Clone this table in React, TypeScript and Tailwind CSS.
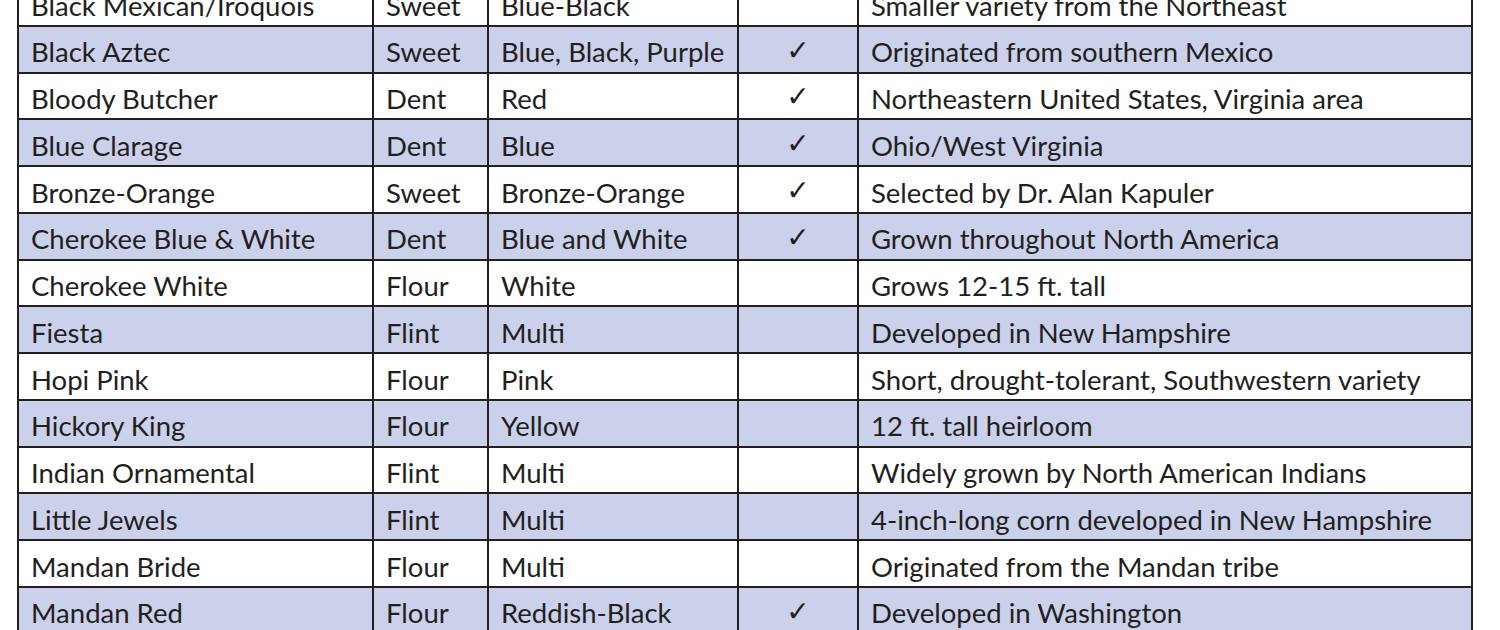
const rows: [string, string, string, boolean, string][] = [
  ["Black Mexican/Iroquois", "Sweet", "Blue-Black", false, "Smaller variety from the Northeast"],
  ["Black Aztec", "Sweet", "Blue, Black, Purple", true, "Originated from southern Mexico"],
  ["Bloody Butcher", "Dent", "Red", true, "Northeastern United States, Virginia area"],
  ["Blue Clarage", "Dent", "Blue", true, "Ohio/West Virginia"],
  ["Bronze-Orange", "Sweet", "Bronze-Orange", true, "Selected by Dr. Alan Kapuler"],
  ["Cherokee Blue & White", "Dent", "Blue and White", true, "Grown throughout North America"],
  ["Cherokee White", "Flour", "White", false, "Grows 12-15 ft. tall"],
  ["Fiesta", "Flint", "Multi", false, "Developed in New Hampshire"],
  ["Hopi Pink", "Flour", "Pink", false, "Short, drought-tolerant, Southwestern variety"],
  ["Hickory King", "Flour", "Yellow", false, "12 ft. tall heirloom"],
  ["Indian Ornamental", "Flint", "Multi", false, "Widely grown by North American Indians"],
  ["Little Jewels", "Flint", "Multi", false, "4-inch-long corn developed in New Hampshire"],
  ["Mandan Bride", "Flour", "Multi", false, "Originated from the Mandan tribe"],
  ["Mandan Red", "Flour", "Reddish-Black", true, "Developed in Washington"],
];

export default function App() {
  return (
    <div className="w-[1500px] h-[630px] overflow-hidden bg-white">
      <table
        className="ml-[17px] mt-[-22px] w-[1456px] table-fixed border-collapse text-[#231f20] text-[27.5px] leading-none"
        style={{ fontFamily: "Lato, 'Open Sans', sans-serif" }}
      >
        <colgroup>
          <col className="w-[355px]" />
          <col className="w-[115px]" />
          <col className="w-[250px]" />
          <col className="w-[120px]" />
          <col className="w-[614px]" />
        </colgroup>
        <tbody>
          {rows.map((r, i) => (
            <tr key={r[0]} className={i % 2 === 1 ? "h-[46.75px] bg-[#cbd1ea]" : "h-[46.75px] bg-white"}>
              <td className="border-2 border-[#231f20] pl-3 pt-[6px] whitespace-nowrap">{r[0]}</td>
              <td className="border-2 border-[#231f20] pl-3 pt-[6px] whitespace-nowrap">{r[1]}</td>
              <td className="border-2 border-[#231f20] pl-3 pt-[6px] whitespace-nowrap">{r[2]}</td>
              <td className="border-2 border-[#231f20] text-center pt-[3px] text-[28px]" style={{ fontFamily: "'DejaVu Sans', sans-serif" }}>
                {r[3] ? "✓" : ""}
              </td>
              <td className="border-2 border-[#231f20] pl-3 pt-[6px] whitespace-nowrap">{r[4]}</td>
            </tr>
          ))}
        </tbody>
      </table>
    </div>
  );
}
